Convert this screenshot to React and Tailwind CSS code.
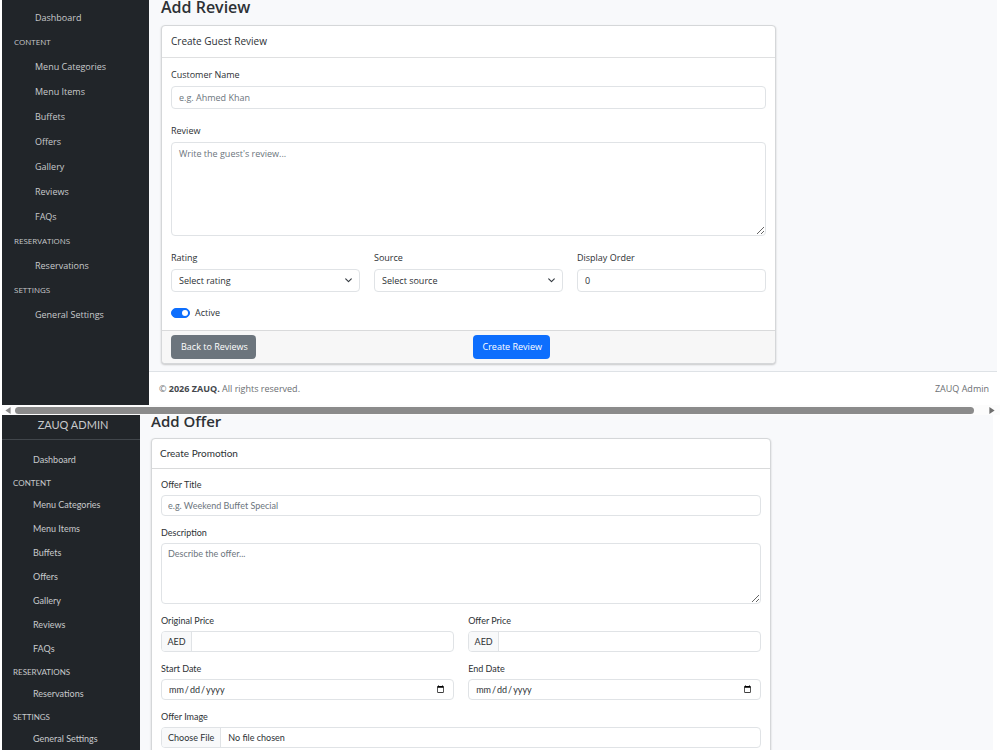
import React, { useState } from "react";
import clsx from "clsx";

const menu = [
  { title: null, links: ["Dashboard"] },
  {
    title: "CONTENT",
    links: [
      "Menu Categories",
      "Menu Items",
      "Buffets",
      "Offers",
      "Gallery",
      "Reviews",
      "FAQs",
    ],
  },
  { title: "RESERVATIONS", links: ["Reservations"] },
  { title: "SETTINGS", links: ["General Settings"] },
];

const control =
  "block w-full rounded-[4px] border border-[#e0e3e6] bg-white text-[#2d3135] outline-none placeholder:text-[#6c757d]";

const Sidebar = ({ compact, brand }) => (
  <aside
    className={clsx(
      "shrink-0 bg-[#212529] text-[9px] text-[#c8cacc]",
      compact ? "w-[138px]" : "w-[147px] pt-[5px]"
    )}
  >
    {brand && (
      <div className="mb-2 h-[25px] border-b border-[#41464b] pl-1 text-center text-[11px] leading-[20px]">
        {brand}
      </div>
    )}
    <nav>
      {menu.map((group) => (
        <div key={group.links[0]}>
          {group.title && (
            <div
              className={clsx(
                "flex items-center text-[8px]",
                compact ? "h-[21px] pl-[11px]" : "h-[24px] pl-3"
              )}
            >
              {group.title}
            </div>
          )}
          <ul>
            {group.links.map((link) => (
              <li key={link}>
                <a
                  href="#"
                  className={clsx(
                    "flex items-center hover:text-white",
                    compact ? "h-[24px] pl-[31px]" : "h-[25px] pl-[33px]"
                  )}
                >
                  {link}
                </a>
              </li>
            ))}
          </ul>
        </div>
      ))}
    </nav>
  </aside>
);

const Field = ({ id, label, tall, children }) => (
  <div>
    <label
      htmlFor={id}
      className={clsx("mb-[3px] block", tall ? "leading-[16px]" : "leading-[15px]")}
    >
      {label}
    </label>
    {children}
  </div>
);

const Select = ({ id, placeholder, options }) => (
  <div className="relative">
    <select id={id} defaultValue="" className={clsx(control, "h-[23px] appearance-none px-[7px]")}>
      <option value="">{placeholder}</option>
      {options.map((o) => (
        <option key={o}>{o}</option>
      ))}
    </select>
    <svg
      viewBox="0 0 16 16"
      className="pointer-events-none absolute top-[7px] right-[7px] h-[9px] w-[9px]"
      fill="none"
      stroke="#343a40"
      strokeWidth="2"
      strokeLinecap="round"
      strokeLinejoin="round"
    >
      <path d="m3 5 5 5 5-5" />
    </svg>
  </div>
);

const PriceInput = ({ id }) => (
  <div className="flex h-[21px] overflow-hidden rounded-[4px] border border-[#e0e3e6] bg-white">
    <span className="flex w-[30px] shrink-0 items-center justify-center border-r border-[#e0e3e6] bg-[#f8f9fa]">
      AED
    </span>
    <input id={id} type="text" inputMode="decimal" className="min-w-0 flex-1 px-[6px] outline-none" />
  </div>
);

const ReviewPage = () => {
  const [active, setActive] = useState(true);

  return (
    <section className="mr-[3px] flex font-['Open_Sans','Noto_Sans',sans-serif] text-[9px]">
      <Sidebar />
      <div className="flex min-w-0 flex-1 flex-col bg-[#f8f9fb]">
        <main className="pr-4 pb-[7px] pl-3">
          <h1 className="mb-[11px] text-[16px] leading-[14px] font-semibold">Add Review</h1>

          <form
            onSubmit={(e) => e.preventDefault()}
            className="w-3/4 rounded-[4px] border border-[#d5d7d9] bg-white shadow-[0_1px_2px_rgba(0,0,0,0.2)]"
          >
            <div className="flex h-[32px] items-center border-b border-[#dfe0e1] px-[9px] text-[10px]">
              Create Guest Review
            </div>

            <div className="flex flex-col gap-[14px] px-[9px] pt-[9px] pb-[10px]">
              <Field tall id="customer" label="Customer Name">
                <input
                  id="customer"
                  type="text"
                  placeholder="e.g. Ahmed Khan"
                  className={clsx(control, "h-[23px] px-[7px]")}
                />
              </Field>
              <Field tall id="review" label="Review">
                <textarea
                  id="review"
                  placeholder="Write the guest's review..."
                  className={clsx(control, "h-[94px] px-[7px] py-[3px] leading-[15px]")}
                />
              </Field>
              <div className="grid grid-cols-3 gap-[14px]">
                <Field tall id="rating" label="Rating">
                  <Select id="rating" placeholder="Select rating" options={["5", "4", "3", "2", "1"]} />
                </Field>
                <Field tall id="source" label="Source">
                  <Select id="source" placeholder="Select source" options={["Google", "Website"]} />
                </Field>
                <Field tall id="order" label="Display Order">
                  <input
                    id="order"
                    type="text"
                    inputMode="numeric"
                    defaultValue="0"
                    className={clsx(control, "h-[23px] px-[7px]")}
                  />
                </Field>
              </div>
              <label className="flex h-[14px] items-center gap-[5px]">
                <input
                  type="checkbox"
                  role="switch"
                  checked={active}
                  onChange={() => setActive(!active)}
                  className="h-[10px] w-[19px] appearance-none rounded-full border border-[#dee2e6] before:block before:size-[6px] before:translate-x-px before:translate-y-px before:rounded-full before:bg-[#adb5bd] checked:border-[#0d6efd] checked:bg-[#0d6efd] checked:before:translate-x-[10px] checked:before:bg-white"
                />
                Active
              </label>
            </div>

            {/* ===== ACTIONS ===== */}
            <div className="grid grid-cols-2 gap-2 rounded-b-[4px] border-t border-[#d9dadb] bg-[#f7f7f7] px-[9px] py-1">
              <button
                type="button"
                className="h-[24px] w-[85px] rounded-[4px] bg-[#6c757d] pl-[10px] text-left text-white"
              >
                Back to Reviews
              </button>
              <button
                type="submit"
                className="h-[24px] w-[77px] rounded-[4px] bg-[#0d6efd] pl-[10px] text-left text-white"
              >
                Create Review
              </button>
            </div>
          </form>
        </main>

        <footer className="flex h-[34px] items-center justify-between border-t border-[#dee2e6] bg-white pr-2 pl-[10px] text-[#6c6f73]">
          <span>
            © <b className="text-[#44474b]">2026 ZAUQ.</b> All rights reserved.
          </span>
          <span>ZAUQ Admin</span>
        </footer>
      </div>
    </section>
  );
};

const ScrollBar = () => (
  <div className="flex h-[10px] shrink-0 items-center bg-[#fcfcfc] pr-[5px] pl-[3px]">
    <svg viewBox="0 0 6 8" className="h-[7px] w-[6px]" fill="#8b8b8b">
      <path d="M6 0v8L0 4z" />
    </svg>
    <div className="mr-[15px] ml-1 h-[7px] flex-1 rounded-full bg-[#8b8b8b]" />
    <svg viewBox="0 0 6 8" className="h-[7px] w-[6px]" fill="#6f6f6f">
      <path d="M0 0v8l6-4z" />
    </svg>
  </div>
);

const OfferPage = () => (
  <section className="mr-[7px] flex min-h-0 flex-1 font-['Lato','Open_Sans',sans-serif] text-[9px]">
    <Sidebar compact brand="ZAUQ ADMIN" />
    <main className="min-w-0 flex-1 bg-[#f8f9fb] pr-[15px] pl-[11px]">
      <h1 className="mb-[11px] font-['Open_Sans','Noto_Sans',sans-serif] text-[15px] leading-[12px] font-semibold">
        Add Offer
      </h1>

      <form
        onSubmit={(e) => e.preventDefault()}
        className="w-3/4 rounded-[4px] border border-[#d5d7d9] bg-white shadow-[0_1px_2px_rgba(0,0,0,0.2)]"
      >
        <div className="flex h-[30px] items-center border-b border-[#d9dadb] px-2 text-[10px]">
          Create Promotion
        </div>

        <div className="flex flex-col gap-[9px] px-[9px] pt-2 pb-10">
          <Field id="title" label="Offer Title">
            <input
              id="title"
              type="text"
              placeholder="e.g. Weekend Buffet Special"
              className={clsx(control, "h-[21px] px-[6px]")}
            />
          </Field>
          <Field id="description" label="Description">
            <textarea
              id="description"
              placeholder="Describe the offer..."
              className={clsx(control, "h-[61px] px-[6px] py-[3px] leading-[14px]")}
            />
          </Field>
          <div className="grid grid-cols-2 gap-x-[14px] gap-y-[9px]">
            <Field id="price" label="Original Price">
              <PriceInput id="price" />
            </Field>
            <Field id="offer-price" label="Offer Price">
              <PriceInput id="offer-price" />
            </Field>
            <Field id="start" label="Start Date">
              <input id="start" type="date" className={clsx(control, "h-[21px] px-[6px]")} />
            </Field>
            <Field id="end" label="End Date">
              <input id="end" type="date" className={clsx(control, "h-[21px] px-[6px]")} />
            </Field>
          </div>
          <Field id="image" label="Offer Image">
            <input
              id="image"
              type="file"
              className={clsx(
                control,
                "h-[21px] overflow-hidden leading-[19px] file:mr-[7px] file:h-[19px] file:border-r file:border-[#e0e3e6] file:bg-[#f8f9fa] file:px-[6px]"
              )}
            />
          </Field>
        </div>
      </form>
    </main>
  </section>
);

const App = () => (
  <div className="flex h-screen flex-col overflow-hidden bg-white pl-[2px] text-[#2d3135]">
    <ReviewPage />
    <ScrollBar />
    <OfferPage />
  </div>
);

export default App;
